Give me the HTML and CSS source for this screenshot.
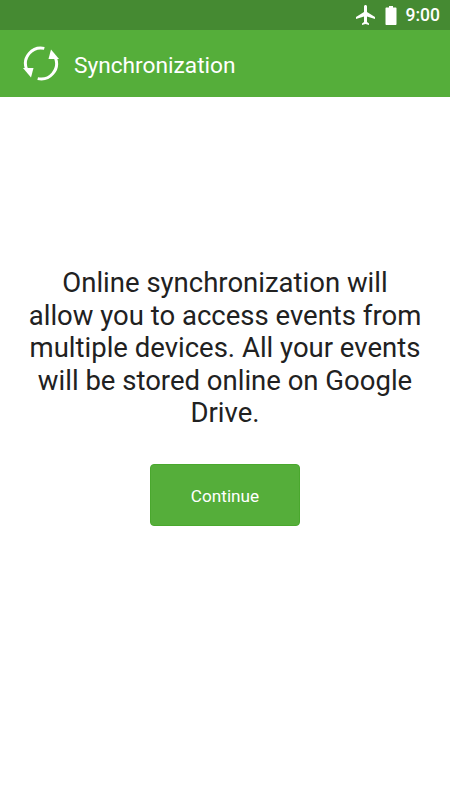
FILE: index.html
```html
<!DOCTYPE html>
<html lang="en">
<head>
    <meta charset="UTF-8">
    <meta name="viewport" content="width=device-width, initial-scale=1.0">
    <title>Synchronization</title>
    <link rel="stylesheet" href="styles.css">
</head>
<body>
    <div class="status-bar">
        <svg class="plane" width="24" height="24" viewBox="0 0 24 24"><path d="M21 16v-2l-8-5V3.500C13 2.670 12.330 2 11.500 2S10 2.670 10 3.500V9l-8 5v2l8-2.500V19l-2 1.500V22l3.500-1 3.500 1v-1.500L13 19v-5.500l8 2.500z" fill="#fff"/></svg>
        <svg class="battery" width="12" height="19" viewBox="0 0 12 19"><path d="M4 0h4v1.500h2.500c.6 0 1 .4 1 1V18c0 .6-.4 1-1 1h-9c-.6 0-1-.4-1-1V2.500c0-.6.4-1 1-1H4z" fill="#fff"/></svg>
        <span class="clock">9:00</span>
    </div>
    <header class="app-bar">
        <svg class="sync-icon" width="36" height="38" viewBox="0 0 36 38" fill="none">
            <path d="M21.300 3.350A15.500 15.500 0 0 0 3.500 24" stroke="#fff" stroke-width="3"/>
            <path d="M14.700 33.650A15.500 15.500 0 0 0 32.500 13" stroke="#fff" stroke-width="3"/>
            <path d="M0 23h10.500l-2.500 9.500z" fill="#fff"/>
            <path d="M36 14H25.500L28 4.500z" fill="#fff"/>
        </svg>
        <span class="app-title">Synchronization</span>
    </header>
    <main class="content">
        <p class="message">Online synchronization will allow you to access events from multiple devices. All your events will be stored online on Google Drive.</p>
        <button class="continue-btn" type="button">Continue</button>
    </main>
</body>
</html>
```
FILE: styles.css
```css
html, body {
    margin: 0;
    padding: 0;
}
body {
    width: 450px;
    height: 800px;
    overflow: hidden;
    background-color: #fff;
    font-family: Roboto, "Liberation Sans", sans-serif;
}
.status-bar {
    height: 30px;
    background-color: #458a32;
    display: flex;
    align-items: center;
    justify-content: flex-end;
    padding-right: 10px;
    color: #fff;
}
.plane {
    margin-right: 7px;
}
.battery {
    margin-right: 9px;
}
.clock {
    font-size: 17.500px;
    font-weight: 500;
}
.app-bar {
    height: 67px;
    background-color: #55ae3a;
    display: flex;
    align-items: center;
    padding-left: 23px;
}
.app-title {
    margin-left: 15px;
    margin-top: 3px;
    color: #fff;
    font-size: 22.700px;
}
.content {
    display: flex;
    flex-direction: column;
    align-items: center;
    padding: 170px 28px 0;
}
.message {
    margin: 0;
    text-align: center;
    color: #212121;
    font-size: 27.500px;
    line-height: 32.500px;
}
.continue-btn {
    margin-top: 34px;
    width: 150px;
    height: 62px;
    padding-top: 3px;
    background-color: #55ae3a;
    color: #fff;
    border: 1px solid #4aa82e;
    border-radius: 4px;
    font-family: inherit;
    font-size: 17.200px;
}
```
